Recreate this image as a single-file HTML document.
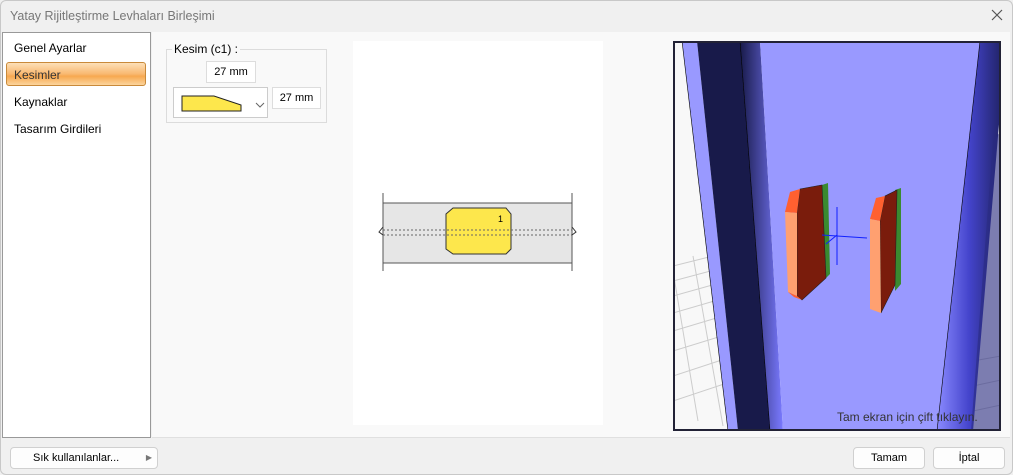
<!DOCTYPE html>
<html><head><style>
*{margin:0;padding:0;box-sizing:border-box}
body{width:1013px;height:475px;background:#f0f0f0;font-family:"Liberation Sans",sans-serif;font-size:12px;position:relative;overflow:hidden;color:#000}
.a{position:absolute}
.btn{position:absolute;background:#fdfdfd;border:1px solid #d0d0d0;border-radius:4px;font-size:11px;text-align:center;line-height:20px}
</style></head><body>
<div class="a" style="left:0;top:0;width:1013px;height:475px;border:1px solid #c8c8c8;border-radius:6px"></div>
<div class="a" style="left:10px;top:9px;font-size:12.5px;color:#777">Yatay Rijitleştirme Levhaları Birleşimi</div>
<svg class="a" style="left:991px;top:9px" width="12" height="12"><path d="M1 1L11 11M11 1L1 11" stroke="#555" stroke-width="1.2"/></svg>
<div class="a" style="left:152px;top:32px;width:858px;height:406px;background:#f9f9f9;border-bottom:1px solid #e0e0e0"></div>
<div class="a" style="left:2px;top:32px;width:149px;height:406px;background:#fff;border:1px solid #999"></div>
<div class="a" style="left:14px;top:41px">Genel Ayarlar</div>
<div class="a" style="left:6px;top:62px;width:140px;height:24px;border:1px solid #c98a3a;border-radius:3px;background:linear-gradient(#fde0b8,#f9b870 50%,#f7a850 60%,#fcd49c)"></div>
<div class="a" style="left:14px;top:68px;color:#333">Kesimler</div>
<div class="a" style="left:14px;top:95px">Kaynaklar</div>
<div class="a" style="left:14px;top:122px">Tasarım Girdileri</div>
<div class="a" style="left:166px;top:49px;width:161px;height:74px;border:1px solid #dcdcdc"></div>
<div class="a" style="left:172px;top:42px;background:#f9f9f9;padding:0 2px">Kesim (c1) :</div>
<div class="a" style="left:206px;top:61px;width:50px;height:22px;background:#fff;border:1px solid #ddd;text-align:center;line-height:20px;font-size:11px">27 mm</div>
<div class="a" style="left:173px;top:87px;width:95px;height:31px;background:#fff;border:1px solid #ccc"></div>
<svg class="a" style="left:180px;top:94px" width="90" height="20"><polygon points="2,2,34,2,61,11,61,17,2,17" fill="#fde74c" stroke="#222" stroke-width="1"/><path d="M76 9l4 4 4-4" stroke="#666" fill="none"/></svg>
<div class="a" style="left:272px;top:87px;width:49px;height:22px;background:#fff;border:1px solid #ddd;text-align:center;line-height:20px;font-size:11px">27 mm</div>
<div class="a" style="left:353px;top:41px;width:250px;height:384px;background:#fff"></div>
<svg class="a" style="left:370px;top:185px" width="220" height="90">
<line x1="13" y1="8" x2="13" y2="86" stroke="#555"/><line x1="202" y1="8" x2="202" y2="86" stroke="#555"/>
<rect x="13" y="18" width="189" height="60" fill="#e6e6e6" stroke="#555"/>
<polygon points="83,23,136,23,141,29,141,64,136,69,83,69,76,64,76,29" fill="#fde74c" stroke="#333"/>
<text x="128" y="37" font-size="9" font-family="Liberation Sans">1</text>
<line x1="13" y1="45" x2="202" y2="45" stroke="#666" stroke-dasharray="2,2"/><line x1="13" y1="50" x2="202" y2="50" stroke="#666" stroke-dasharray="2,2"/>
<path d="M13 42l-4 5 4 3M202 42l4 5-4 3" stroke="#333" fill="none"/>
</svg>
<svg class="a" style="left:673px;top:41px" width="328" height="390">
<rect width="328" height="390" fill="#f8f8f8"/>
<g stroke="#ccc" fill="none"><path d="M0 225l40-10M0 240l45-12M0 255l50-14M0 272l55-16M0 290l60-18M0 310l65-20M0 335l70-23M0 360l75-25M20 215l30 170M0 230l25 150M45 210l30 170"/><path d="M300 320l28-5M300 345l28-6M300 370l28-6"/></g>
<defs><linearGradient id="g1" x1="0" x2="1"><stop offset="0" stop-color="#181a4a"/><stop offset="1" stop-color="#7a7aff"/></linearGradient>
<linearGradient id="g2" x1="0" x2="1"><stop offset="0" stop-color="#8a8aff"/><stop offset=".5" stop-color="#4444cc"/><stop offset="1" stop-color="#22246a"/></linearGradient></defs>
<polygon points="9,0 24,0 65,390 55,390" fill="#9999ff"/>
<polygon points="24,0 67,0 97,390 65,390" fill="#181a4a"/>
<polygon points="67,0 87,0 110,390 97,390" fill="url(#g1)"/>
<polygon points="87,0 307,0 264,390 110,390" fill="#9999ff"/>
<polygon points="307,0 328,0 328,60 300,390 264,390" fill="url(#g2)"/>
<polygon points="320,100 328,90 328,390 298,390" fill="#2a2c80" opacity=".6"/>
<line x1="9" y1="0" x2="55" y2="390" stroke="#000" stroke-width=".6"/>
<line x1="67" y1="0" x2="97" y2="390" stroke="#000" stroke-width=".6"/>
<line x1="307" y1="0" x2="264" y2="390" stroke="#000" stroke-width=".6"/>
<!-- left plate -->
<polygon points="149,144 155,142 157,233 153,237" fill="#3a8a30"/>
<polygon points="124,172 127,148 149,144 153,237 129,259 124,255" fill="#7a1c0c" stroke="#222" stroke-width=".6"/>
<polygon points="112,171 117,151 127,148 124,172" fill="#ff6030"/>
<polygon points="112,171 124,172 124,255 115,251" fill="#ffa070"/>
<polygon points="115,251 124,255 129,259 121,256" fill="#ff6030"/>
<!-- right plate -->
<polygon points="222,149 228,147 228,243 222,250" fill="#3a8a30"/>
<polygon points="207,180 212,155 224,149 222,244 208,272" fill="#7a1c0c" stroke="#222" stroke-width=".6"/>
<polygon points="197,178 203,157 212,155 207,180" fill="#ff6030"/>
<polygon points="197,178 207,180 208,272 197,268" fill="#ffa070"/>
<g stroke="#1020ff" stroke-width="1"><line x1="164" y1="166" x2="164" y2="224"/><line x1="149" y1="194" x2="194" y2="197"/><line x1="153" y1="203" x2="164" y2="194"/></g>
<text x="164" y="380" font-size="12" fill="#333" font-family="Liberation Sans">Tam ekran için çift tıklayın.</text>
<rect x="1" y="1" width="326" height="388" fill="none" stroke="#222236" stroke-width="2"/>
</svg>
<div class="btn" style="left:10px;top:447px;width:148px;text-align:left;padding-left:22px">Sık kullanılanlar...<span style="position:absolute;right:5px;top:0;font-size:8px;color:#777">▶</span></div>
<div class="btn" style="left:853px;top:447px;width:72px">Tamam</div>
<div class="btn" style="left:933px;top:447px;width:72px">İptal</div>
</body></html>
